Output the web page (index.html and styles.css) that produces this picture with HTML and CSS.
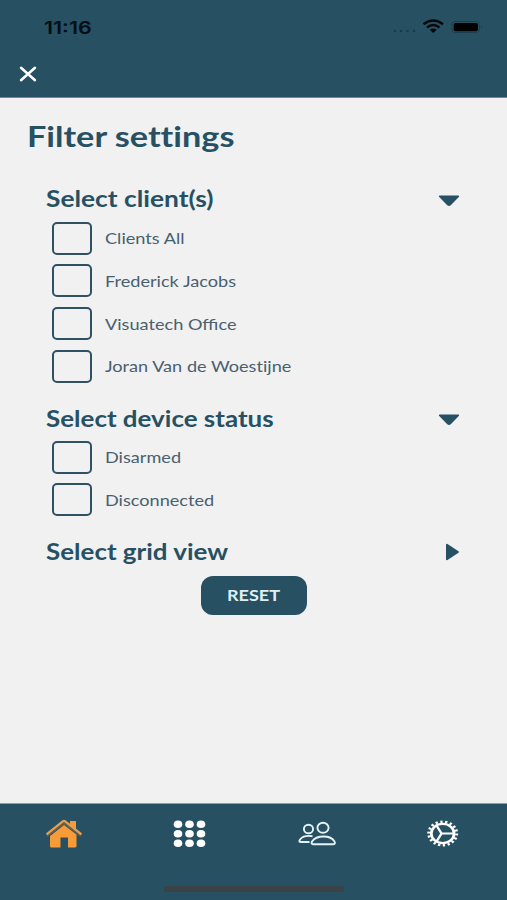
FILE: index.html
```html
<!DOCTYPE html>
<html lang="en">
<head>
<meta charset="utf-8">
<title>Filter settings</title>
<link rel="stylesheet" href="styles.css">
</head>
<body>
<div class="screen">
  <header class="header">
    <div class="status">
      <span class="time"><span class="wide">11:16</span></span>
      <svg class="status-icons" width="92" height="18" viewBox="0 0 92 18">
        <g fill="#1a3a4b"><circle cx="5" cy="13" r="1.2"/><circle cx="11" cy="13" r="1.2"/><circle cx="17.500" cy="13" r="1.200"/><circle cx="24" cy="13" r="1.200"/></g>
        <g fill="none" stroke="#05090c" stroke-width="2.500"><path d="M33.500 6.200Q43.200-1.200 53 6.200"/><path d="M37 9.400Q43.200 4.600 49.500 9.400"/></g>
        <path d="M39.700 11.700Q43.200 9.400 46.800 11.700L43.200 15Z" fill="#05090c"/>
        <rect x="62" y="3.500" width="27.500" height="11" rx="3" fill="none" stroke="#1f3e4d" stroke-width="1"/>
        <rect x="63.700" y="5" width="24.300" height="8.200" rx="2" fill="#000"/>
        <path d="M91 7.500q2 1.500 0 3z" fill="#1f3e4d"/>
      </svg>
    </div>
    <svg class="close" width="18" height="16" viewBox="0 0 18 16"><path d="M2 1.800L16 14.200M16 1.800L2 14.200" stroke="#fff" stroke-width="2.500" stroke-linecap="round"/></svg>
  </header>
  <main class="content">
    <h1 class="title"><span class="wide">Filter settings</span></h1>
    <section class="group">
      <h2 class="heading first"><span class="wide">Select client(s)</span><svg class="arrow" width="22" height="18" viewBox="0 0 22 18"><path d="M1.500 5.500H20.500Q21.500 6 21 6.800L13 15Q11 17 9 15L1 6.800Q.5 6 1.500 5.500Z"/></svg></h2>
      <label class="row"><span class="box"></span><span class="wide">Clients All</span></label>
      <label class="row"><span class="box"></span><span class="wide">Frederick Jacobs</span></label>
      <label class="row"><span class="box"></span><span class="wide joined">Visuatech Office</span></label>
      <label class="row"><span class="box"></span><span class="wide">Joran Van de Woestijne</span></label>
    </section>
    <section class="group">
      <h2 class="heading"><span class="wide">Select device status</span><svg class="arrow" width="22" height="18" viewBox="0 0 22 18"><path d="M1.500 4.500H20.500Q21.500 5 21 5.800L13 14Q11 16 9 14L1 5.800Q.5 5 1.500 4.500Z"/></svg></h2>
      <label class="row"><span class="box"></span><span class="wide">Disarmed</span></label>
      <label class="row"><span class="box"></span><span class="wide">Disconnected</span></label>
    </section>
    <section class="group last">
      <h2 class="heading"><span class="wide">Select grid view</span><svg class="arrow" width="22" height="18" viewBox="0 0 22 18"><path d="M8 1.500Q8 .5 9.500 1L20.500 8.200Q21.500 9 20.500 9.800L9.500 17Q8 17.500 8 16.500Z"/></svg></h2>
    </section>
    <button class="reset"><span class="wide">RESET</span></button>
  </main>
  <nav class="nav">
    <div class="tabs">
      <svg width="38" height="30" viewBox="0 0 38 30">
        <path d="M7 15.500L19 6L31.500 15.500V27Q31.500 28.500 30 28.500H23V18.500H15.500V28.500H6.500Q5 28.500 5 27V17Z" fill="#f79a38"/>
        <path d="M25 2H31V11L25 6.500Z" fill="#f79a38"/>
        <path d="M2 17L19 4.200L36 17" fill="none" stroke="#6b5f48" stroke-width="1.800"/>
        <path d="M2.200 14.800L17.800 2.300Q19 1.300 20.200 2.300L35.800 14.800" fill="none" stroke="#e6a04d" stroke-width="2.200" stroke-linecap="round"/>
      </svg>
      <svg width="38" height="30" viewBox="0 0 38 30" fill="#fff">
        <ellipse cx="7" cy="5.200" rx="4.300" ry="3.800"/><ellipse cx="18.500" cy="5.200" rx="4.300" ry="3.800"/><ellipse cx="30" cy="5.200" rx="4.300" ry="3.800"/>
        <ellipse cx="7" cy="14.700" rx="4.300" ry="3.800"/><ellipse cx="18.500" cy="14.700" rx="4.300" ry="3.800"/><ellipse cx="30" cy="14.700" rx="4.300" ry="3.800"/>
        <ellipse cx="7" cy="24.200" rx="4.300" ry="3.800"/><ellipse cx="18.500" cy="24.200" rx="4.300" ry="3.800"/><ellipse cx="30" cy="24.200" rx="4.300" ry="3.800"/>
      </svg>
      <svg width="38" height="30" viewBox="0 0 38 30" fill="none" stroke="#e5f3f7" stroke-width="1.900">
        <ellipse cx="10.500" cy="10" rx="4.600" ry="4.300"/><ellipse cx="25" cy="8.800" rx="5.600" ry="5"/>
        <path d="M14.500 17.200Q6 15.800 2.500 20Q.2 23 2.500 23H11.500"/>
        <path d="M15 25.200Q12.800 25.200 14 22.500Q17.500 17.500 25.500 17.500Q33.500 17.500 36.500 22.500Q37.600 25.200 35.500 25.200Z"/>
      </svg>
      <svg width="38" height="30" viewBox="0 0 38 30" fill="none" stroke="#fff">
        <g transform="translate(18.700 14.500) scale(1.190 1)">
          <circle r="9.600" stroke-width="2.300"/>
          <circle r="11.800" stroke-width="2.400" pathLength="72" stroke-dasharray="1.900 2.100"/>
          <path d="M-1 0L-5.200-8M-1 0L-5.200 8M-1 0H9.500" stroke-width="2"/>
        </g>
      </svg>
    </div>
    <div class="indicator"></div>
  </nav>
</div>
</body>
</html>
```
FILE: styles.css
```css
* { box-sizing: border-box; }
body {
  margin: 0;
  background: #f1f1f2;
  color: #275063;
  font-family: Lato, "Liberation Sans", sans-serif;
  font-variant-ligatures: none;
}
.screen { width: 507px; height: 900px; display: flex; flex-direction: column; overflow: hidden; }
.header { height: 98px; flex: none; background: #275063; border-bottom: 1px solid #708b98; padding: 17.500px 21px 0 19px; }
.status { display: flex; justify-content: space-between; height: 20px; padding-left: 25px; }
.time { font: 600 17px/20px Inter, sans-serif; color: #020d14; }
.time .wide { transform: scaleX(1.260); }
.status-icons { overflow: visible; margin-right: 4px; }
.close { display: block; margin-top: 28.500px; }
.wide { display: inline-block; white-space: nowrap; transform: scaleX(1.185); transform-origin: left center; }
.joined { font-variant-ligatures: normal; }
.content { flex: 1; padding: 18px 46px 0; display: flex; flex-direction: column; }
.title { margin: 0 0 28px -19.500px; font-size: 28px; line-height: 40px; font-weight: 700; }
.title .wide { transform: scaleX(1.222); }
.group { margin-bottom: 15.300px; }
.group.last { margin-bottom: 6px; }
.heading { margin: 0; height: 33px; padding-bottom: 1px; display: flex; align-items: center; justify-content: space-between; font-size: 22px; line-height: 30px; font-weight: 700; }
.heading .wide { transform: scaleX(1.180); }
.heading.first { padding-bottom: 3px; }
.heading.first .wide { transform: scaleX(1.198); }
.last .heading { padding-bottom: 3px; }
.arrow { fill: #275063; margin-right: 1px; }
.row { display: flex; align-items: center; height: 42.670px; padding-left: 6px; font-size: 15.300px; color: #49606d; }
.box { width: 40px; height: 33px; border: 2px solid #2e5263; border-radius: 5px; margin-right: 13px; }
.reset { align-self: center; width: 106px; height: 39.500px; padding: 0; border: 0; border-radius: 12px; background: #275063; color: #dff0f5; font: 700 15.300px/20px Lato, sans-serif; }
.reset .wide { transform: scaleX(1.180); transform-origin: center; }
.nav { height: 97.500px; flex: none; background: #275063; border-top: 1px solid #8da4ae; padding: 15px 45px 0; }
.tabs { display: flex; justify-content: space-between; height: 30px; }
.indicator { width: 180px; height: 6px; margin: 37px auto 0; border-radius: 3px; background: #3a4246; }
```
